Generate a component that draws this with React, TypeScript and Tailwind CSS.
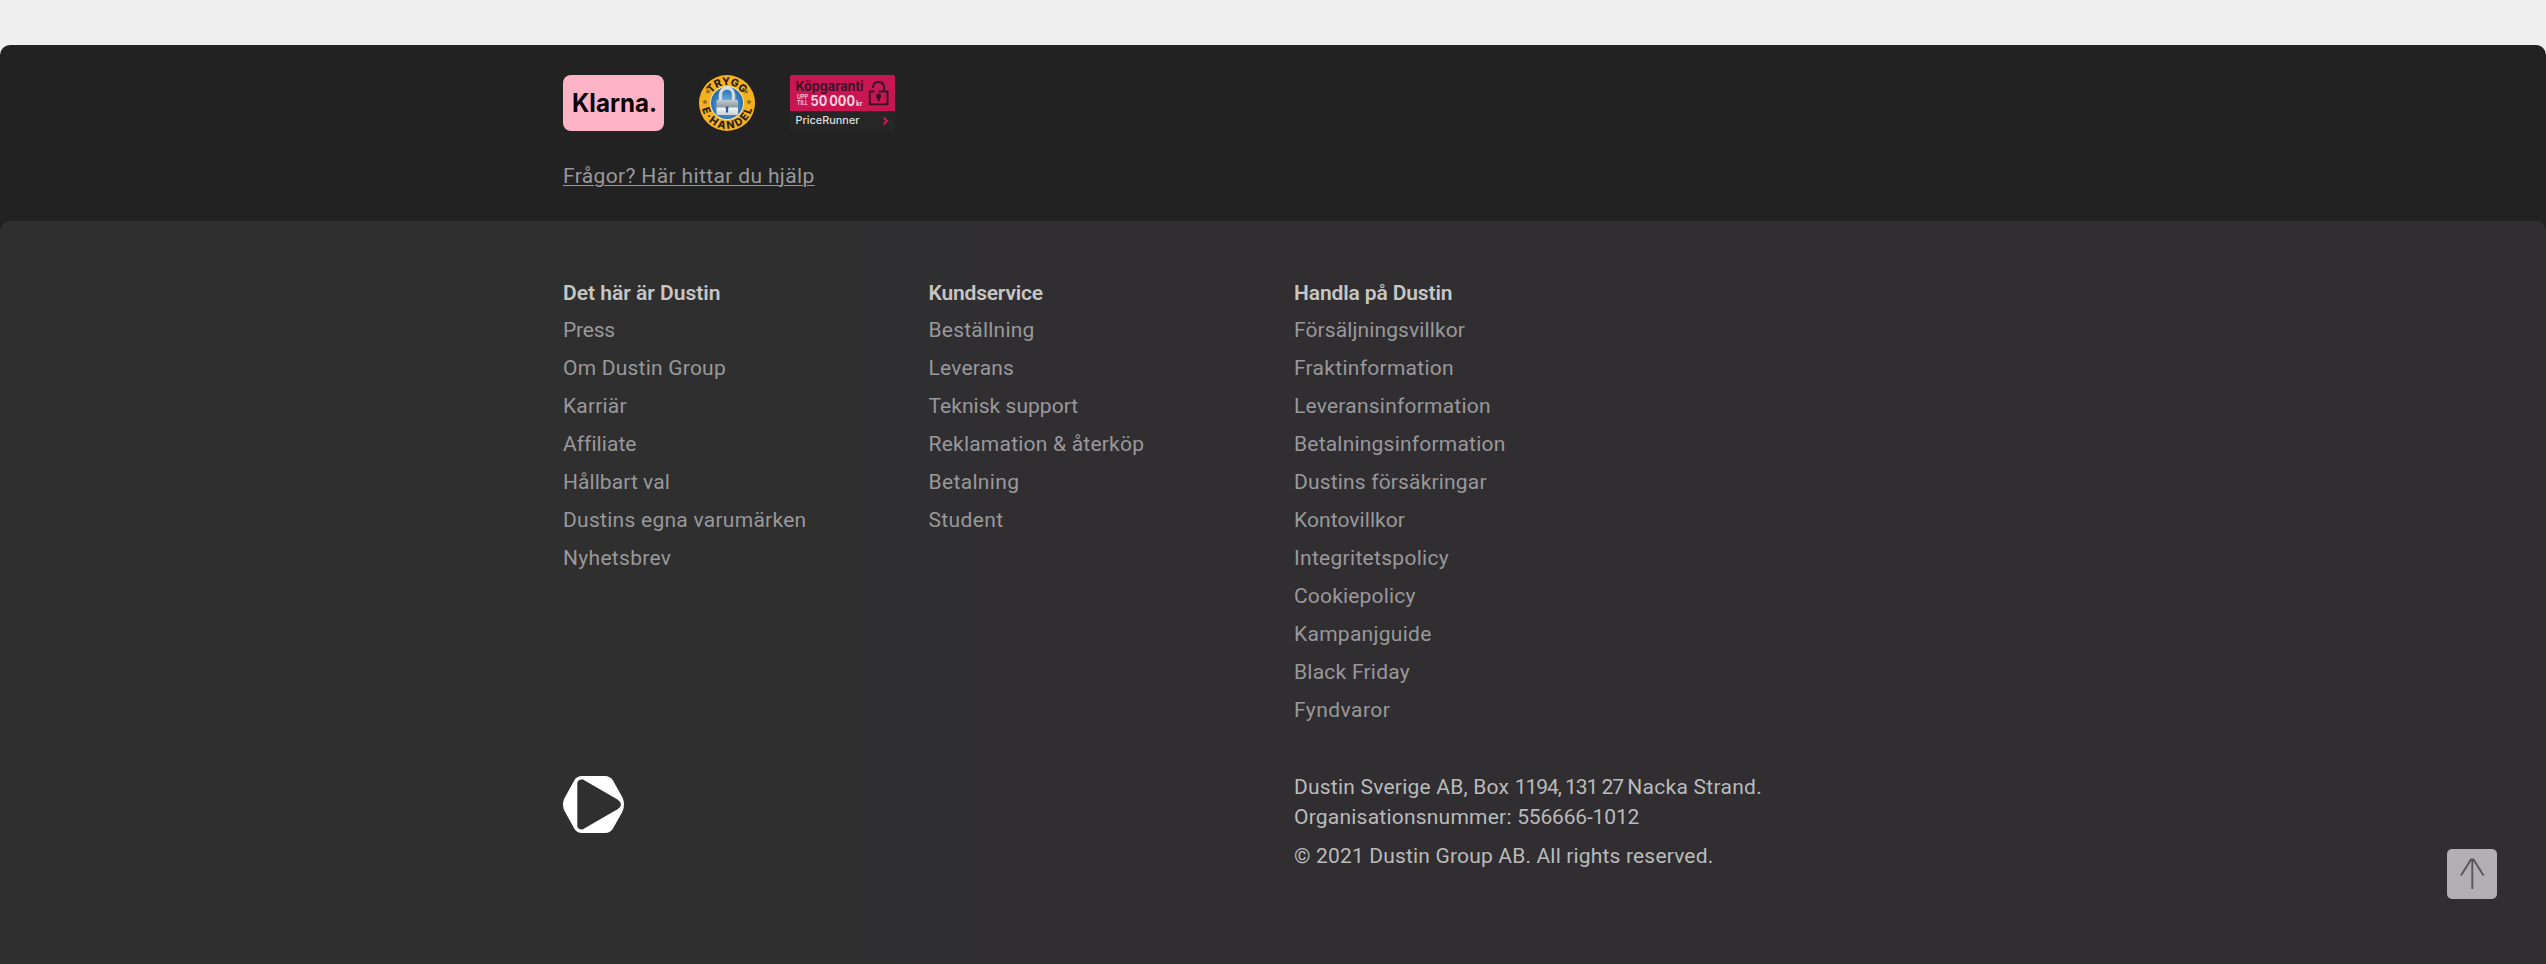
type Item = { label: string; track: string };

const about: Item[] = [
  { label: "Press", track: "tracking-[-0.2px]" },
  { label: "Om Dustin Group", track: "tracking-[0.22px]" },
  { label: "Karriär", track: "tracking-[0.18px]" },
  { label: "Affiliate", track: "tracking-[0.05px]" },
  { label: "Hållbart val", track: "tracking-[0.06px]" },
  { label: "Dustins egna varumärken", track: "tracking-[0.27px]" },
  { label: "Nyhetsbrev", track: "tracking-[0.3px]" },
];

const service: Item[] = [
  { label: "Beställning", track: "tracking-[0.22px]" },
  { label: "Leverans", track: "tracking-[0.2px]" },
  { label: "Teknisk support", track: "tracking-[0.04px]" },
  { label: "Reklamation & återköp", track: "tracking-[0.22px]" },
  { label: "Betalning", track: "tracking-[0.35px]" },
  { label: "Student", track: "tracking-[0.38px]" },
];

const shopping: Item[] = [
  { label: "Försäljningsvillkor", track: "tracking-[0.1px]" },
  { label: "Fraktinformation", track: "tracking-[0.28px]" },
  { label: "Leveransinformation", track: "tracking-[0.22px]" },
  { label: "Betalningsinformation", track: "tracking-[0.21px]" },
  { label: "Dustins försäkringar", track: "tracking-[0.17px]" },
  { label: "Kontovillkor", track: "tracking-[0.07px]" },
  { label: "Integritetspolicy", track: "tracking-[0.3px]" },
  { label: "Cookiepolicy", track: "tracking-[0.18px]" },
  { label: "Kampanjguide", track: "tracking-[0.27px]" },
  { label: "Black Friday", track: "tracking-[0.24px]" },
  { label: "Fyndvaror", track: "tracking-[0.45px]" },
];

function LinkColumn({ title, track, items }: { title: string; track: string; items: Item[] }) {
  return (
    <div>
      <h3 className={`h-[37px] whitespace-nowrap font-semibold leading-[38px] text-[#c6c6c4] ${track}`}>{title}</h3>
      <ul>
        {items.map((item) => (
          <li key={item.label} className="h-[38px] leading-[38px]">
            <a href="#" className={`whitespace-nowrap text-[#99989a] ${item.track}`}>
              {item.label}
            </a>
          </li>
        ))}
      </ul>
    </div>
  );
}

function KlarnaBadge() {
  return (
    <svg className="h-14 w-[101px]" viewBox="0 0 101 56" aria-label="Klarna">
      <rect width="101" height="56" rx="8" fill="#ffb3c7" />
      <text x="9" y="37.4" textLength="85" lengthAdjust="spacingAndGlyphs" fontFamily="Inter, sans-serif" fontWeight="700" fontSize="25.5" fill="#0b0508">
        Klarna.
      </text>
    </svg>
  );
}

const STAR = "M0-2.8.8-.9 2.8-.8 1.2.5 1.8 2.5 0 1.3-1.8 2.5-1.2.5-2.8-.8-.8-.9Z";

function TryggBadge() {
  return (
    <svg className="size-14" viewBox="-28 -28 56 56" aria-label="Trygg e-handel">
      <defs>
        <radialGradient id="globe" cx="0.5" cy="0.55" r="0.6">
          <stop offset="0" stopColor="#8cc4ea" />
          <stop offset="0.6" stopColor="#3b85c4" />
          <stop offset="1" stopColor="#1c5c9e" />
        </radialGradient>
        <linearGradient id="steel" x1="0" y1="0" x2="0" y2="1">
          <stop offset="0" stopColor="#c3cbd2" />
          <stop offset="0.45" stopColor="#8f9ba6" />
          <stop offset="0.55" stopColor="#f1f3f5" />
          <stop offset="1" stopColor="#c9d0d6" />
        </linearGradient>
        <path id="arcTop" d="M-18 0A18 18 0 0 1 18 0" />
        <path id="arcBottom" d="M-25.8 0A25.8 25.8 0 0 0 25.8 0" />
      </defs>
      <circle r="28" fill="#f5b120" />
      <circle r="17" fill="#f3e3b0" />
      <circle r="16" fill="url(#globe)" />
      <path d="M-6.5-1V-8.5A6.2 6.2 0 0 1 6.5-8.5V-1" fill="none" stroke="#d3dae0" strokeWidth="3.4" />
      <rect x="-10.5" y="-3" width="21.5" height="15" rx="1" fill="url(#steel)" />
      <path d="M0 3.2a1.6 1.6 0 0 1 1.1 2.7V9.4H-1.1V5.9A1.6 1.6 0 0 1 0 3.2Z" fill="#235f9c" />
      <g fontFamily="Inter, sans-serif" fontWeight="800" fontSize="10.6" fill="#2a2112" textAnchor="middle">
        <text textLength="37" lengthAdjust="spacing">
          <textPath href="#arcTop" startOffset="50%">TRYGG</textPath>
        </text>
        <text textLength="69" lengthAdjust="spacing">
          <textPath href="#arcBottom" startOffset="50%">E·HANDEL</textPath>
        </text>
      </g>
      <g fill="#8a6a22">
        <path d={STAR} transform="translate(-22 -1)" />
        <path d={STAR} transform="translate(22 -1)" />
        <path d={STAR} transform="translate(-19 -11.5)" />
        <path d={STAR} transform="translate(19 -11.5)" />
      </g>
    </svg>
  );
}

function PriceRunnerBadge() {
  return (
    <svg className="h-14 w-[105px]" viewBox="0 0 105 56" aria-label="PriceRunner" fontFamily="Inter, sans-serif">
      <rect width="105" height="56" rx="1.5" fill="#262627" />
      <path d="M1.5 0H103.5A1.5 1.5 0 0 1 105 1.5V36H0V1.5A1.5 1.5 0 0 1 1.5 0Z" fill="#c91653" />
      <text x="5.5" y="15.7" textLength="68" lengthAdjust="spacingAndGlyphs" fontWeight="700" fontSize="13.2" fill="#35152a">
        Köpgaranti
      </text>
      <g fill="#f4d4df">
        <text x="7" y="23.6" textLength="11" lengthAdjust="spacingAndGlyphs" fontWeight="600" fontSize="5.6">UPP</text>
        <text x="7" y="29.8" textLength="11" lengthAdjust="spacingAndGlyphs" fontWeight="600" fontSize="5.6">TILL</text>
        <text x="20.5" y="30.5" fontWeight="700" fontSize="14" textLength="44.5" lengthAdjust="spacingAndGlyphs">
          50{"\u2009"}000
        </text>
        <text x="66" y="30.5" textLength="6.5" lengthAdjust="spacingAndGlyphs" fontWeight="700" fontSize="7">kr</text>
      </g>
      <g fill="none" stroke="#35152a" strokeWidth="2">
        <path d="M84.5 16.5H79.8V29.3H97.5V16.5H88.5" />
        <path d="M83 13V11.5A5.6 5.6 0 0 1 94 11.5V16.5" />
      </g>
      <path d="M88.6 18.4a2.8 2.8 0 0 1 1.3 5.2l-.3 2.6h-2l-.3-2.6a2.8 2.8 0 0 1 1.3-5.2Z" fill="#35152a" />
      <text x="5.5" y="49.2" textLength="64" lengthAdjust="spacingAndGlyphs" fontWeight="500" fontSize="11" fill="#dededf">
        PriceRunner
      </text>
      <path d="M93.5 42.5 97 46 93.5 49.5" fill="none" stroke="#cc1655" strokeWidth="2.2" />
    </svg>
  );
}

function DustinMark() {
  return (
    <svg className="mt-1 h-[57px] w-[61px]" viewBox="0 0 61 57" aria-label="Dustin">
      <path
        d="M19 0H42Q47 0 50 4.5L59.5 21.5Q62.5 28.5 59.5 35.5L50 52.5Q47 57 42 57H19Q14 57 11.5 53L1.3 34.5Q-1.3 28.5 1.3 22.5L11.5 4Q14 0 19 0Z"
        fill="#fff"
      />
      <path
        d="M14.3 7.5Q14.3 3.5 19.5 3.2L54.5 23.5Q58 26 58 28.5 58 31 54.5 33.3L19.5 53.5Q14.3 53.5 14.3 49.5Z"
        fill="#2f2f2f"
      />
    </svg>
  );
}

export default function App() {
  return (
    <div className="h-[964px] overflow-hidden bg-[#efefef] pt-[45px] font-['Roboto','Liberation_Sans',sans-serif] text-[21px]">
      <footer className="h-[919px] overflow-hidden rounded-t-[10px] bg-[#222223]">
        <div className="h-44 pl-[563px] pt-[30px]">
          <div className="flex items-start">
            <KlarnaBadge />
            <div className="ml-[35px] flex">
              <TryggBadge />
            </div>
            <div className="ml-[35px] flex">
              <PriceRunnerBadge />
            </div>
          </div>
          <a
            href="#"
            className="mt-[30px] inline-block whitespace-nowrap leading-[30px] tracking-[0.36px] text-[#99989a] underline decoration-1 underline-offset-2"
          >
            Frågor? Här hittar du hjälp
          </a>
        </div>

        <div className="h-[743px] rounded-t-[10px] bg-linear-to-r from-[#2f2f2f] from-30% to-[#302e31] to-40% pl-[563px] pt-[53px]">
          <div className="grid h-[498px] grid-cols-[365.5px_365.5px_500px]">
            <LinkColumn title="Det här är Dustin" track="tracking-[0px]" items={about} />
            <LinkColumn title="Kundservice" track="tracking-[-0.18px]" items={service} />
            <LinkColumn title="Handla på Dustin" track="tracking-[-0.13px]" items={shopping} />
          </div>
          <div className="grid grid-cols-[731px_500px_1fr]">
            <DustinMark />
            <div className="whitespace-nowrap leading-[30px] text-[#bbbaba]">
              <p>
                <span className="tracking-[0.22px]">Dustin Sverige AB, Box </span>
                <span className="tracking-[-1.03px]">1194, 131 27 </span>
                <span className="tracking-[0.28px]">Nacka Strand.</span>
              </p>
              <p>
                <span className="tracking-[0.22px]">Organisationsnummer: </span>
                <span className="tracking-[-0.16px]">556666-1012</span>
              </p>
              <p className="mt-[9px] tracking-[0.17px]">© 2021 Dustin Group AB. All rights reserved.</p>
            </div>
            <div className="flex justify-end pr-[49px] pt-[77px]">
              <button aria-label="Till toppen" className="size-[50px] rounded-[5px] bg-[#b1afb2]">
                <svg className="size-[50px]" viewBox="0 0 50 50" fill="none" stroke="#57565a" strokeWidth="1.9">
                  <path d="M14 26.5 24 10.5H26.5L36.5 26.5M25.3 10.5V40" />
                </svg>
              </button>
            </div>
          </div>
        </div>
      </footer>
    </div>
  );
}
